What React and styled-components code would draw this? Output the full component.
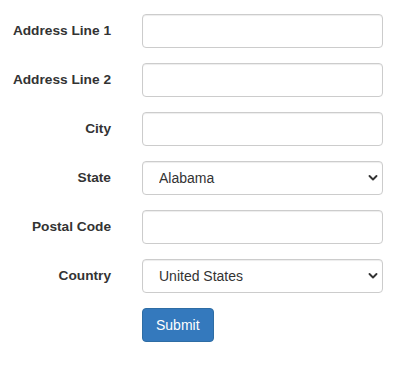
import React from "react";
import styled, { createGlobalStyle } from "styled-components";

const Global = createGlobalStyle`
  html, body { margin: 0; padding: 0; background: #fff; }
  body { font-family: "Liberation Sans", Arial, Helvetica, sans-serif; font-size: 14px; color: #333; }
  * { box-sizing: border-box; }
`;

const Form = styled.form`
  display: grid;
  grid-template-columns: 111px 241px;
  column-gap: 31px;
  row-gap: 15px;
  padding: 14px 0 0 0;
  align-items: center;
`;

const Label = styled.label`
  text-align: right;
  font-weight: bold;
  font-size: 13.7px;
  color: #333;
  line-height: 20px;
`;

const Input = styled.input`
  height: 34px;
  width: 100%;
  border: 1px solid #ccc;
  border-radius: 4px;
  padding: 6px 12px;
  font-family: inherit;
  font-size: 14px;
  color: #555;
  box-shadow: inset 0 1px 1px rgba(0,0,0,0.075);
  outline: none;
  background: #fff;
`;

const SelectWrap = styled.div`
  position: relative;
  height: 34px;
`;

const Select = styled.select`
  appearance: none;
  -webkit-appearance: none;
  height: 34px;
  width: 100%;
  border: 1px solid #ccc;
  border-radius: 4px;
  padding: 0 30px 0 16px;
  font-family: inherit;
  font-size: 14px;
  color: #333;
  background: #fff;
  box-shadow: inset 0 1px 1px rgba(0,0,0,0.075);
  outline: none;
`;

const Chevron = styled.svg`
  position: absolute;
  right: 5px;
  top: 13px;
  width: 10px;
  height: 8px;
  pointer-events: none;
`;

const Spacer = styled.div``;

const Button = styled.button`
  justify-self: start;
  height: 34px;
  padding: 6px 13px;
  font-family: inherit;
  font-size: 14px;
  color: #fff;
  background: #3479bd;
  border: 1px solid #2e6da4;
  border-radius: 4px;
  line-height: 20px;
`;

const Field = ({ id, label }) => (
  <>
    <Label htmlFor={id}>{label}</Label>
    <Input id={id} type="text" />
  </>
);

const SelectField = ({ id, label, value }) => (
  <>
    <Label htmlFor={id}>{label}</Label>
    <SelectWrap>
      <Select id={id} defaultValue={value}>
        <option>{value}</option>
      </Select>
      <Chevron viewBox="0 0 10 8">
        <path d="M1.5 2 L5 5.5 L8.5 2" fill="none" stroke="#333" strokeWidth="1.9" strokeLinecap="round" strokeLinejoin="round" />
      </Chevron>
    </SelectWrap>
  </>
);

export default function App() {
  return (
    <>
      <Global />
      <Form onSubmit={(e) => e.preventDefault()}>
        <Field id="a1" label="Address Line 1" />
        <Field id="a2" label="Address Line 2" />
        <Field id="city" label="City" />
        <SelectField id="state" label="State" value="Alabama" />
        <Field id="zip" label="Postal Code" />
        <SelectField id="country" label="Country" value="United States" />
        <Spacer />
        <Button type="submit">Submit</Button>
      </Form>
    </>
  );
}
